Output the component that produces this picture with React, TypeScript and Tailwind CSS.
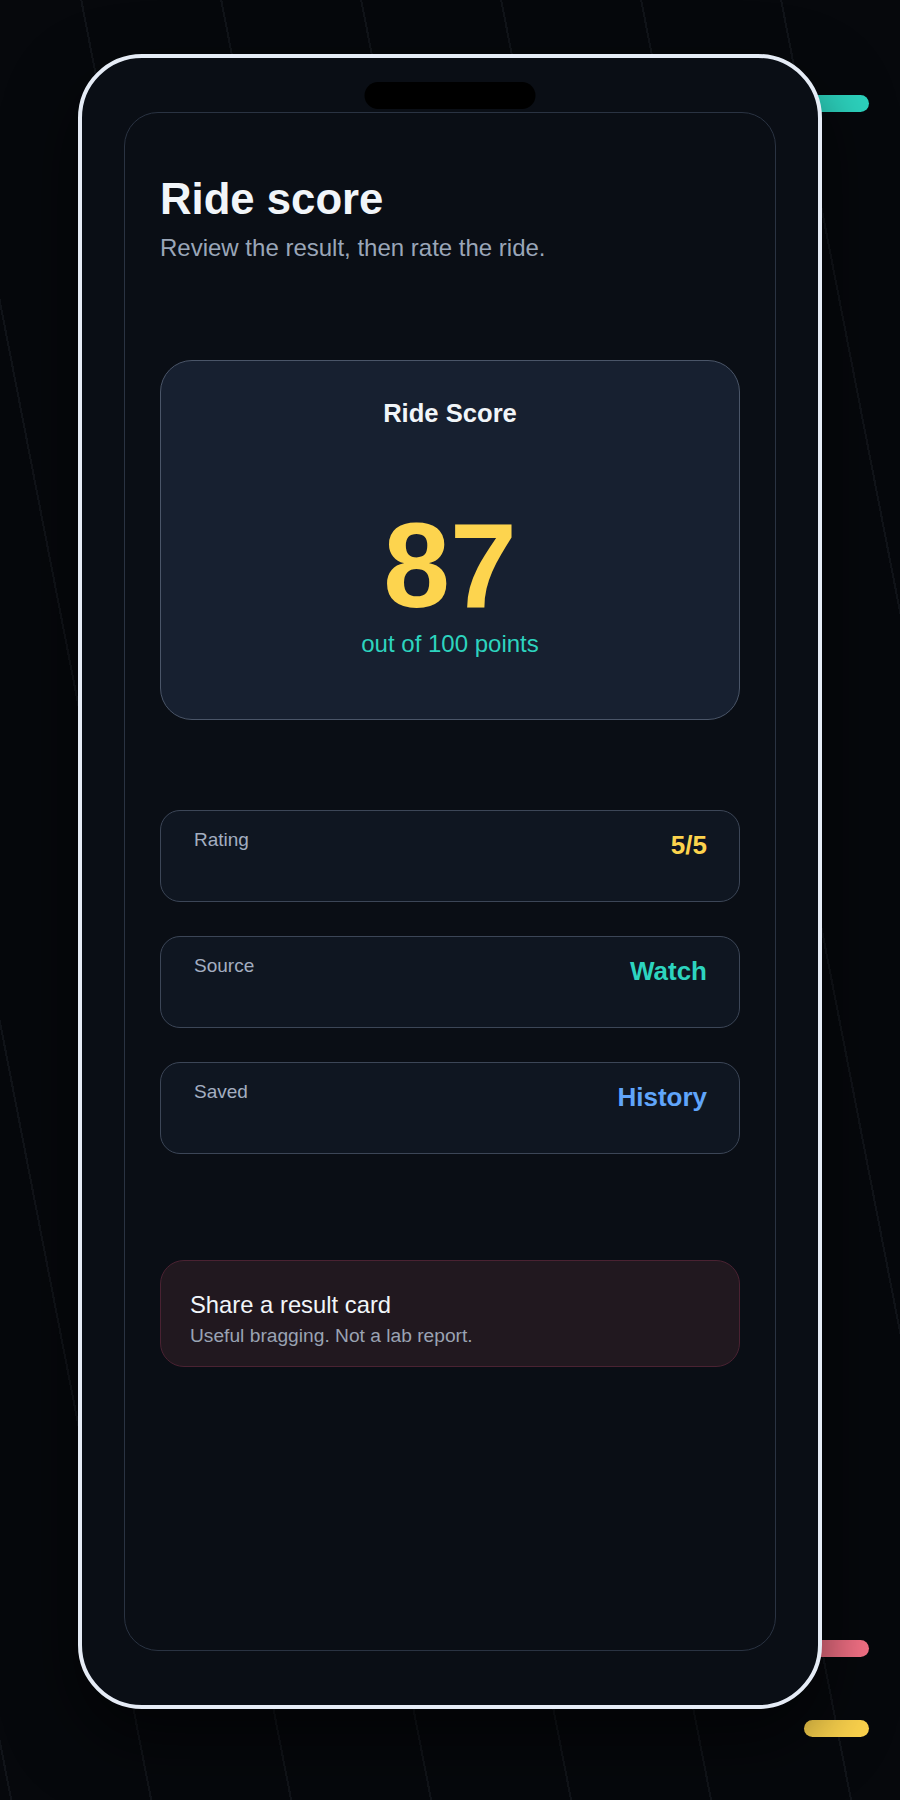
import React from "react";

function Row({ label, value, color }: { label: string; value: string; color: string }) {
  return (
    <div className="flex h-[92px] items-start justify-between rounded-[20px] border border-[#3c4657] bg-[#0f1621] pl-[33px] pr-[32px] pt-[18px]">
      <span className="text-[19px] leading-[22px] text-[#a3aec0]">{label}</span>
      <span className={"mt-[1px] text-[26px] font-bold leading-[30px] " + color}>{value}</span>
    </div>
  );
}

export default function App() {
  return (
    <div
      className="relative min-h-[1800px] w-full overflow-hidden bg-[#06080c] pt-[54px] pl-[78px]"
      style={{ fontFamily: '"Liberation Sans", Arial, sans-serif' }}
    >
      <div className="pointer-events-none absolute inset-0 bg-[image:repeating-linear-gradient(79deg,transparent_0px,transparent_10px,rgba(148,163,184,0.075)_10px,rgba(148,163,184,0.075)_12px,transparent_12px,transparent_137.4px)]" />

      {/* side pills (behind the phone) */}
      <div className="absolute left-[804px] top-[95px] h-[17px] w-[65px] rounded-full bg-[#2dd4bf]" />
      <div className="absolute left-[804px] top-[1640px] h-[17px] w-[65px] rounded-full bg-[#f87388]" />
      <div className="absolute left-[804px] top-[1720px] h-[17px] w-[65px] rounded-full bg-[#fcd34d]" />

      <div className="relative z-10 flex h-[1655px] w-[744px] flex-col rounded-[64px] border-4 border-[#e6ecf6] bg-[#0a0e15] px-[42px] py-[54px] shadow-[0_30px_70px_rgba(0,0,0,0.6)]">
        <div className="absolute left-1/2 top-[24px] h-[27px] w-[171px] -translate-x-1/2 rounded-full bg-black" />

        <div className="flex flex-1 flex-col rounded-[34px] border border-[#2a3342] bg-[#0a0e15] px-[35px] pt-[61px]">
          <h1 className="text-[43.7px] font-bold leading-[50px] text-[#f1f5f9]">Ride score</h1>
          <p className="mt-[10px] text-[24px] leading-[28px] text-[#9aa6b8]">
            Review the result, then rate the ride.
          </p>

          <div className="mt-[98px] flex h-[360px] flex-col items-center rounded-[32px] border border-[#4a5568] bg-[#172030] pt-[37px]">
            <div className="text-[25.6px] font-bold leading-[30px] text-[#f1f5f9]">Ride Score</div>
            <div className="mt-[77px] text-[120px] font-bold leading-[120px] text-[#fdd44e]">87</div>
            <div className="mt-[5px] text-[24px] leading-[28px] text-[#2dd4bf]">out of 100 points</div>
          </div>

          <div className="mt-[90px] flex flex-col gap-[34px]">
            <Row label="Rating" value="5/5" color="text-[#fcd34d]" />
            <Row label="Source" value="Watch" color="text-[#2dd4bf]" />
            <Row label="Saved" value="History" color="text-[#60a5fa]" />
          </div>

          <div className="mt-[106px] h-[107px] rounded-[24px] border border-[#4a2232] bg-[#21181f] pl-[29px] pt-[30px]">
            <div className="text-[23.8px] leading-[28px] text-[#f1f5f9]">Share a result card</div>
            <div className="mt-[6px] text-[19.2px] leading-[22px] text-[#9aa3b3]">
              Useful bragging. Not a lab report.
            </div>
          </div>
        </div>
      </div>
    </div>
  );
}
